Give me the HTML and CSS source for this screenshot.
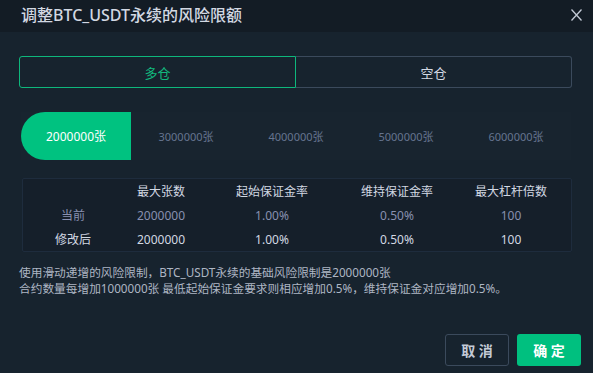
FILE: index.html
```html
<!DOCTYPE html>
<html lang="zh">
<head>
    <meta charset="UTF-8">
    <title>调整风险限额</title>
    <link rel="stylesheet" href="styles.css">
</head>
<body>
    <div class="dialog">
        <div class="dialog-header">
            <span class="dialog-title">调整BTC_USDT永续的风险限额</span>
            <span class="close-btn">
                <svg width="11" height="12" viewBox="0 0 11 12"><path d="M0.5 0.5 L10.5 11.5 M10.5 0.5 L0.5 11.5" stroke="#c3cad6" stroke-width="1.3" fill="none"/></svg>
            </span>
        </div>

        <div class="dialog-body">
            <div class="side-tabs">
                <div class="side-tab active">多仓</div>
                <div class="side-tab">空仓</div>
            </div>

            <div class="level-bar">
                <div class="level active">2000000张</div>
                <div class="level">3000000张</div>
                <div class="level">4000000张</div>
                <div class="level">5000000张</div>
                <div class="level">6000000张</div>
            </div>

            <div class="risk-table">
                <div class="cell head"></div>
                <div class="cell head">最大张数</div>
                <div class="cell head">起始保证金率</div>
                <div class="cell head">维持保证金率</div>
                <div class="cell head">最大杠杆倍数</div>

                <div class="cell muted">当前</div>
                <div class="cell muted">2000000</div>
                <div class="cell muted">1.00%</div>
                <div class="cell muted">0.50%</div>
                <div class="cell muted">100</div>

                <div class="cell">修改后</div>
                <div class="cell">2000000</div>
                <div class="cell">1.00%</div>
                <div class="cell">0.50%</div>
                <div class="cell">100</div>
            </div>

            <div class="note">
                使用滑动递增的风险限制，BTC_USDT永续的基础风险限制是2000000张<br>
                合约数量每增加1000000张 最低起始保证金要求则相应增加0.5%，维持保证金对应增加0.5%。
            </div>

            <div class="actions">
                <button class="btn btn-cancel">取 消</button>
                <button class="btn btn-ok">确 定</button>
            </div>
        </div>
    </div>
</body>
</html>
```

FILE: styles.css
```css
body {
    margin: 0;
    padding: 0;
    background-color: #17232e;
    font-family: "Noto Sans", "Noto Sans CJK SC", sans-serif;
    width: 593px;
    height: 373px;
    overflow: hidden;
}

.dialog {
    width: 593px;
    height: 373px;
    background-color: #17232e;
}

.dialog-header {
    height: 32px;
    background-color: #131c25;
    display: flex;
    align-items: center;
    justify-content: space-between;
    padding: 0 11px 0 21px;
}

.dialog-title {
    font-size: 16px;
    font-weight: 500;
    color: #d2d8e2;
    line-height: 1;
    margin-top: -2px;
}

.close-btn {
    display: flex;
    margin-top: -3px;
}

.dialog-body {
    padding: 24px 21px 0 21px;
}

.side-tabs {
    display: flex;
    height: 32px;
    margin: 0 0 0 -2px;
}

.side-tab {
    flex: 1;
    display: flex;
    align-items: center;
    justify-content: center;
    font-size: 13px;
    color: #d2d8e2;
    border: 1px solid #3b4a5c;
    box-sizing: border-box;
}

.side-tab:first-child {
    border-radius: 3px 0 0 3px;
}

.side-tab:last-child {
    border-radius: 0 3px 3px 0;
    border-left: none;
}

.side-tab.active {
    border-color: #0eb77c;
    color: #12b97e;
}

.level-bar {
    display: flex;
    height: 48px;
    margin-top: 24px;
    margin-right: 1px;
    background-color: #18242f;
}

.level {
    flex: 1;
    display: flex;
    align-items: center;
    justify-content: center;
    font-size: 11px;
    color: #66758f;
}

.level.active {
    background-color: #00c280;
    color: #ffffff;
    font-size: 12px;
    border-radius: 24px 0 0 24px;
}

.risk-table {
    display: grid;
    grid-template-columns: 100px 76px 146px 104px 124px;
    margin: 18px 0 0 1px;
    width: 550px;
    box-sizing: border-box;
    border: 1px solid #1e2c3d;
    border-radius: 2px;
    background-color: #151f2a;
}

.cell {
    height: 24px;
    display: flex;
    align-items: center;
    justify-content: center;
    font-size: 12px;
    color: #d2d8e2;
}

.cell.head {
    color: #d2d8e2;
}

.cell.muted {
    color: #8890b0;
}

.note {
    margin-top: 12px;
    margin-left: -2px;
    font-size: 11.7px;
    line-height: 16px;
    color: #aeb6c4;
}

.actions {
    display: flex;
    justify-content: flex-end;
    gap: 8px;
    margin-top: 38px;
    margin-right: -9px;
}

.btn {
    height: 32px;
    width: 64px;
    border-radius: 3px;
    font-family: "Noto Sans", "Noto Sans CJK SC", sans-serif;
    font-size: 14px;
    font-weight: bold;
    cursor: pointer;
    padding: 0;
}

.btn-cancel {
    background: transparent;
    border: 1px solid #3b4a5c;
    color: #c3cad6;
}

.btn-ok {
    background: #00c07f;
    border: none;
    color: #ffffff;
}
```
